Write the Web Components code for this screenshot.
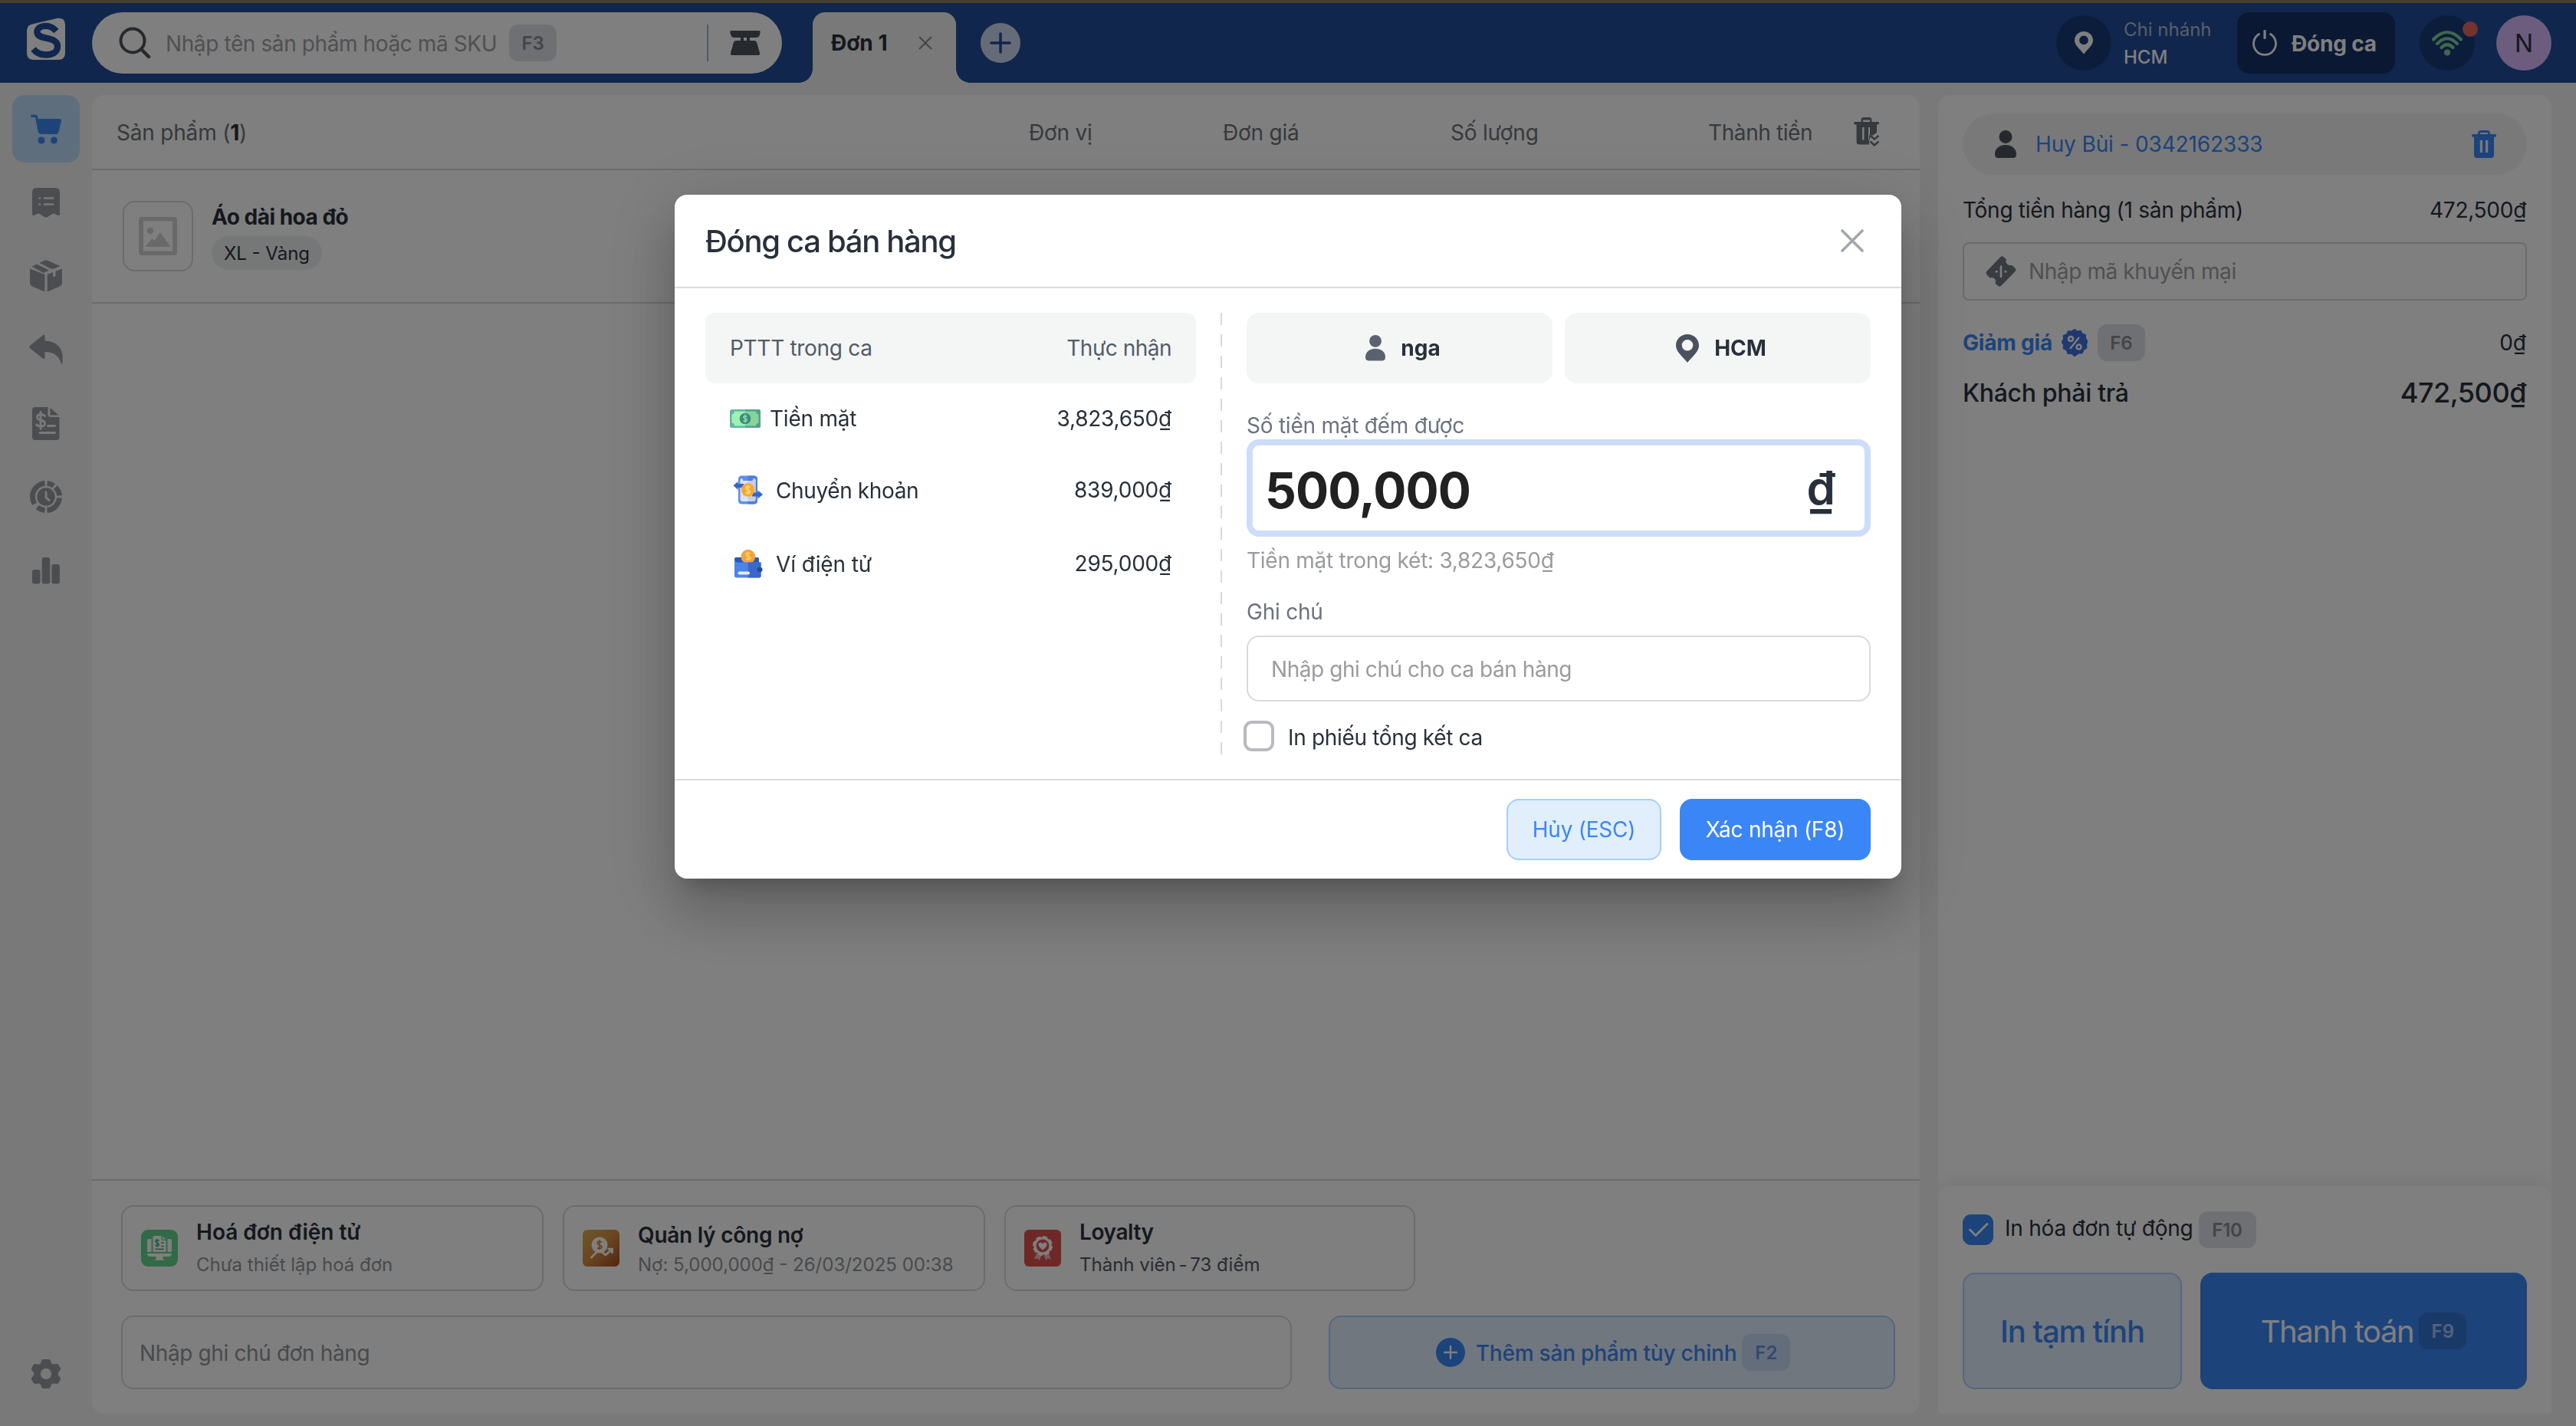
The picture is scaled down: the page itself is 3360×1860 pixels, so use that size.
<!DOCTYPE html>
<html lang="vi">
<head>
<meta charset="utf-8">
<title>Bán hàng</title>
<style>
html,body{margin:0;padding:0;height:100%}
body{font-family:Inter,"Noto Sans","Liberation Sans",sans-serif;font-size:28px;color:#28303b;background:#f3f3f3;overflow:hidden}
</style>
</head>
<body>
<pos-app></pos-app>
<script>
const BASE = `*{box-sizing:border-box}svg{display:block;flex:none}span{white-space:nowrap}`;
function define(name, css, html){
  const t = document.createElement('template');
  t.innerHTML = `<style>${BASE}${css}</style>${html}`;
  customElements.define(name, class extends HTMLElement{
    constructor(){ super(); this.attachShadow({mode:'open'}).appendChild(t.content.cloneNode(true)); }
  });
}

const ICONS = {
  logo:[50,56,`<path d="M9 8 L40 .8 Q50 0 50 9 V46 Q50 55 41 55 H9 Q0 55 0 46 V17 Q0 9 9 8Z" fill="#fff"/><path d="M38.500 17.500 C33 11.500 27 10.300 22 11 C15 12 13 16 13.500 19.500 C14.500 29.500 39.500 24 40 37 C40.500 46 32 48.500 25 48.500 C18 48.500 13 46.500 8.500 41" fill="none" stroke="#204c9a" stroke-width="8.300"/>`],
  search:[42,42,`<circle cx="18" cy="18" r="15.500" fill="none" stroke="currentColor" stroke-width="4"/><path d="M29.500 29.500 L39 39" stroke="currentColor" stroke-width="4.500" stroke-linecap="round"/>`],
  scale:[40,32,`<path d="M2 0 H38 Q40 0 39.700 2 L39 5 Q38.300 9 34 9 H6 Q1.700 9 1 5 L.3 2 Q0 0 2 0Z"/><path d="M14 8h4v6h-4zM22 8h4v6h-4z"/><path d="M8 13 H32 Q34.500 13 35.200 15.500 L39 29 Q39.700 32 37 32 H3 Q.3 32 1 29 L4.800 15.500 Q5.500 13 8 13Z"/>`],
  x18:[18,18,`<path d="M1 1 L17 17 M17 1 L1 17" stroke="currentColor" stroke-width="2.200"/>`],
  x28:[30,30,`<path d="M2 2 L28 28 M28 2 L2 28" stroke="currentColor" stroke-width="3.600" stroke-linecap="round"/>`],
  plus:[52,52,`<circle cx="26" cy="26" r="26" fill="#cdd9ee"/><path d="M26 14 V38 M14 26 H38" stroke="#204c9a" stroke-width="3.500" stroke-linecap="round"/>`],
  plusblue:[38,38,`<circle cx="19" cy="19" r="19" fill="#3b86f7"/><path d="M19 10 V28 M10 19 H28" stroke="#fff" stroke-width="2.400"/>`],
  pin:[30,37,`<path fill-rule="evenodd" d="M15 0 C6.500 0 0 6.500 0 14.500 C0 23 8 28 15 37 C22 28 30 23 30 14.500 C30 6.500 23.500 0 15 0Z M15 7 a7.300 7.300 0 1 1 0 14.600 a7.300 7.300 0 1 1 0-14.600Z"/>`],
  power:[34,34,`<path d="M9.500 5.500 A14.500 14.500 0 1 0 24.500 5.500" fill="none" stroke="currentColor" stroke-width="2.800" stroke-linecap="round"/><path d="M17 1.500 V10.500" stroke="currentColor" stroke-width="3.200" stroke-linecap="round"/>`],
  wifi:[42,34,`<g fill="none" stroke="#7fd19c" stroke-width="4.200" stroke-linecap="round"><path d="M3 12.500 Q21 -6.500 39 12.500"/><path d="M8 18 Q21 4.500 34 18"/><path d="M13.500 23 Q21 15.500 28.500 23"/></g><circle cx="21" cy="29.500" r="4" fill="#7fd19c"/>`],
  cart:[40,39,`<path d="M1.500 1.700 H7 Q8.500 1.700 9 3.500 L9.500 7 H38 Q40.300 7 39.900 9.500 L36.500 24 Q35.800 27 33 27 H14 Q10.500 27 9.500 23 L6 5 H1.500 Q0 5 0 3.300 Q0 1.700 1.500 1.700Z" transform="translate(0 -1)"/><circle cx="14" cy="34" r="4.500"/><circle cx="30.500" cy="34" r="4.500"/>`],
  receipt:[36,39,`<path fill-rule="evenodd" d="M6 0 H30 Q36 0 36 6 V34 Q36 37 33 35.800 L29.500 34 Q27.500 33 25.500 34.500 L20 38 Q18 39 16 38 L10.500 34.500 Q8.500 33 6.500 34 L3 35.800 Q0 37 0 34 V6 Q0 0 6 0Z"/><path d="M9.500 13.500 h.5 M16 13.500 H27 M9.500 21.500 h.5 M16 21.500 H27" stroke="#f3f3f3" stroke-width="2.700" stroke-linecap="round"/>`],
  box:[42,42,`<path d="M2.500 8.500 L9 5.500 L25 13.500 L18 17 Z M12.500 4 L19 .8 Q21 0 23 .8 L39.500 8 L34 10.500 L28.500 12 Z" /><path d="M0 11.500 L19.300 19 V41.500 L4 35 Q0 33 0 29.500Z M22.700 19 L30 16 V21 Q30 22.500 31.500 22 L33.500 21.200 V14.700 L42 11.500 V29.500 Q42 33 38 35 L22.700 41.500Z"/>`],
  reply:[44,40,`<path d="M17 2 Q20.500 -1 20.500 3 V8.500 C34 9 46 16 43.500 37 Q43 40 41.500 37 C38 27 31 23 20.500 23 V30 Q20.500 34 17 31 L1.500 18.500 Q-.8 16.500 1.500 14.500Z"/>`],
  bill:[36,43,`<path d="M4 0 H20.500 V9.500 Q20.500 13 24 13 H35.500 V39 Q35.500 43 31.500 43 H4 Q0 43 0 39 V4 Q0 0 4 0Z"/><path d="M23.500 1 L34.500 10.500 H23.500Z"/><path d="M16.500 11.500 Q14 9.500 11 9.500 Q6.500 9.800 6.500 13 Q6.500 16 11 17 Q16.500 18 16.500 21.500 Q16.500 25 11 25 Q8 25 5.500 23 M11 6.500 V28.500 M20.500 24.500 H29.500 M10 33.500 H29.500" fill="none" stroke="#f3f3f3" stroke-width="2.900" stroke-linecap="round"/>`],
  shift:[42,42,`<circle cx="21" cy="21" r="17.600" fill="none" stroke="currentColor" stroke-width="6.800" pathLength="360" stroke-dasharray="30 10 40 10 80 10 35 18 117 10" transform="rotate(-85 21 21)"/><circle cx="21" cy="21" r="11.700"/><path d="M21 15 V22 L25 25.500" fill="none" stroke="#f3f3f3" stroke-width="3" stroke-linecap="round" stroke-linejoin="round"/>`],
  bars:[36,36,`<rect x="0" y="17" width="10.500" height="18.500" rx="3"/><rect x="12.700" y="1" width="10.500" height="34.500" rx="3"/><rect x="25.400" y="10" width="10.500" height="25.500" rx="3"/>`],
  gear:[40,40,`<path fill-rule="evenodd" d="M14.500 2 Q15 1 16.500 1 H23.500 Q25 1 25.500 2 L27 6 Q28 8 30 7.500 L34 7 Q35.500 7 36.200 8 L38.800 12.500 Q39.500 13.700 38.500 15 L36 18.500 Q35.200 20 36 21.500 L38.500 25 Q39.500 26.300 38.800 27.500 L36.200 32 Q35.500 33 34 33 L30 32.500 Q28 32 27 34 L25.500 38 Q25 39 23.500 39 H16.500 Q15 39 14.500 38 L13 34 Q12 32 10 32.500 L6 33 Q4.500 33 3.800 32 L1.200 27.500 Q.5 26.300 1.500 25 L4 21.500 Q4.800 20 4 18.500 L1.500 15 Q.5 13.700 1.200 12.500 L3.800 8 Q4.500 7 6 7 L10 7.500 Q12 8 13 6Z M20 12.800 a7.200 7.200 0 1 0 0 14.400 a7.200 7.200 0 1 0 0-14.400Z"/>`],
  image:[50,50,`<path fill-rule="evenodd" d="M4 0 H46 Q50 0 50 4 V46 Q50 50 46 50 H4 Q0 50 0 46 V4 Q0 0 4 0Z M6 5.500 V44.500 H44 V5.500Z"/><circle cx="15" cy="18" r="4.300"/><path d="M8.500 39 L17 28 L20.500 31 L28 20 L41.500 39Z"/>`],
  trashall:[34,38,`<path fill-rule="evenodd" d="M9.500 3.500 Q9.500 0 13 0 H20 Q23.500 0 23.500 3.500 V6 H32 Q33 6 33 7.500 Q33 9.500 31.500 9.500 H30 V20 L24 24 L20 22.500 V35.500 H7 Q3.500 35.500 3.500 32 V9.500 H1.500 Q0 9.500 0 7.700 Q0 6 1.500 6 H9.500Z M12 6 H21 V3.500 H12Z M11 13 V29.500 H13.500 V13Z M19 13 V29.500 H21 V13Z"/><path d="M21.500 24 L26.800 28.500 L32.500 24 M21.500 31.500 L26.800 36.500 L32.500 31.500" fill="none" stroke="currentColor" stroke-width="2.500"/>`],
  trash:[32,36,`<path fill-rule="evenodd" d="M8 4 Q8 0 12 0 H20 Q24 0 24 4 V5 H31 Q32 5 32 6.800 Q32 8.700 30.500 8.700 H29 V32 Q29 36 25 36 H7 Q3 36 3 32 V8.700 H1.500 Q0 8.700 0 6.800 Q0 5 1.500 5 H8Z M11 5 H21 V3 H11Z M10.800 13 V29 H14 V13Z M18 13 V29 H21.200 V13Z"/>`],
  person:[28,36,`<circle cx="14" cy="8.500" r="8.500"/><path d="M14 19 C21 19 28 23 28 31 Q28 36 24 36 H4 Q0 36 0 31 C0 23 7 19 14 19Z"/>`],
  ticket:[40,40,`<path d="M19 1.500 Q21.500 -.8 24 1.500 L27 4.500 Q25.500 8 28 10.500 Q31 13 34.500 12 L38 15.500 Q40.500 18 38 20.500 L20.500 38.500 Q18 40.800 15.500 38.500 L12.500 35.500 Q14 32 11.500 29.500 Q9 27 5.500 28.500 L1.800 24.500 Q-.6 22 1.800 19.500Z"/><path d="M20 13.500 V27 M13.800 20.200 h.8 M25.500 20.200 h.8" stroke="#fff" stroke-width="2.600" stroke-linecap="round"/>`],
  percent:[34,36,`<path fill="#3f70e4" d="M17 0 L20.500 3 L25 2 L27 6 L31.500 7.500 L31.500 12 L34 16 L32.500 20 L33 25 L29 27.500 L27 32 L22.500 32 L17 36 L13 32.500 L8 32.500 L6.500 28 L2 25.500 L2.500 21 L0 17 L2.500 13 L2 8.500 L6.500 7 L8.500 2.500 L13 3Z" stroke="#3f70e4" stroke-width="1" stroke-linejoin="round"/><circle cx="12" cy="13" r="3" fill="none" stroke="#fff" stroke-width="2.500"/><circle cx="22.500" cy="23.500" r="3" fill="none" stroke="#fff" stroke-width="2.500"/><path d="M23 11 L11 26" stroke="#fff" stroke-width="2.200"/>`],
  check:[40,40,`<rect width="40" height="40" rx="11" fill="#3b86f7"/><path d="M9.500 20 L17 27.500 L32 12.500" fill="none" stroke="#fff" stroke-width="2.800" stroke-linecap="round" stroke-linejoin="round"/>`],
  einv:[48,48,`<rect width="48" height="48" rx="9" fill="#62d58c"/><g fill="#fff"><path d="M8 29 V14 Q8 12 10 12 H13.500 V29Z M40 29 V14 Q40 12 38 12 H34.500 V29Z"/><path d="M15.500 29 V10 Q15.500 8 17.500 8 H26.500 V12 Q26.500 14 28.500 14 H32.500 V29Z M28 8.500 L32.500 12.500 H28Z"/><path d="M8 31 H40 Q40 35 36.500 35 H28.500 V38 L31 39.800 H17 L19.500 38 V35 H11.500 Q8 35 8 31Z"/></g><path d="M23.500 14.500 Q21 12.500 19.300 14 Q18.300 16.200 21 17 Q24 18.200 23 20.300 Q21 22 18.500 20 M21 12 V22.500 M26 17 H30 M26 21.500 H30 M18.500 25.300 H29.500" fill="none" stroke="#4cb877" stroke-width="1.700"/>`],
  debt:[48,48,`<defs><linearGradient id="g" x1="0" y1="0" x2="1" y2="1"><stop offset="0" stop-color="#d9b555"/><stop offset=".5" stop-color="#d58a40"/><stop offset="1" stop-color="#a8481f"/></linearGradient></defs><rect width="48" height="48" rx="6" fill="url(#g)"/><circle cx="22" cy="20" r="10.500" fill="#fff"/><path d="M10.500 37 L21.500 26 L30 33 L38 25.500 M32.500 25 H38.500 V31" stroke="#fff" stroke-width="2.600" fill="none"/><path d="M25 16.500 Q22 14 19.500 16 Q18.500 19 22 20 Q26 21 24.500 23.500 Q22 25.500 19 23.500 M22 13.500 V26" fill="none" stroke="#d58a36" stroke-width="1.800"/>`],
  loyal:[48,48,`<rect width="48" height="48" rx="6" fill="#dc524d"/><path d="M16 31 L13 38.500 L17.500 37.500 L20 40 L22.500 33Z M32 31 L35 38.500 L30.500 37.500 L28 40 L25.500 33Z" fill="#fff" opacity=".6"/><circle cx="24" cy="21" r="11.500" fill="none" stroke="#fff" stroke-width="3" stroke-dasharray="6 3"/><circle cx="24" cy="21" r="10" fill="none" stroke="#fff" stroke-width="3.200"/><path d="M24 26.500 C20 23.500 18 21 18.500 18.500 C19.500 16 22.500 16 24 18.500 C25.500 16 28.500 16 29.500 18.500 C30 21 28 23.500 24 26.500Z" fill="#fff"/>`],
  cash:[40,24,`<rect width="40" height="24" rx="2.500" fill="#62b5a3"/><path d="M20 0 H37.500 Q40 0 40 2.500 V21.500 Q40 24 37.500 24 H20Z" fill="#54a08d"/><path d="M6 2.500 H20 V21.500 H6 Q6 18 2.500 17.500 V6.500 Q6 6 6 2.500Z" fill="#9df2b2"/><path d="M34 2.500 H20 V21.500 H34 Q34 18 37.500 17.500 V6.500 Q34 6 34 2.500Z" fill="#87d49b"/><circle cx="20" cy="12" r="7.300" fill="#3e8a82"/><path d="M22.500 9.500 Q20 7.500 18 9 Q17 11.200 20 12 Q23.500 13 22 15 Q20 16.500 17.500 14.600 M20 6.500 V17.500" fill="none" stroke="#8fe0a8" stroke-width="1.400"/>`],
  transfer:[40,38,`<path d="M12 .5 H27 Q32 .5 32 5 V33 Q32 37.500 27 37.500 H12 Q7 37.500 7 33 V5 Q7 .5 12 .5Z" fill="#5b8ef0"/><path d="M19.500 .5 H27 Q32 .5 32 5 V33 Q32 37.500 27 37.500 H19.500Z" fill="#4d7fdd"/><path d="M9.500 6 Q10 4 12 4 L13.500 7 H25.500 L27 4 Q29 4 29.500 6 V31 Q29.500 34 26.500 34 H12.500 Q9.500 34 9.500 31Z" fill="#dce3f2"/><path d="M19.500 7 H25.500 L27 4 Q29 4 29.500 6 V31 Q29.500 34 26.500 34 H19.500Z" fill="#c6cfe2"/><path d="M.5 13.300 L6.500 8 V11 H14 V16 H6.500 V19Z M39 25 L32.500 19.500 V22.500 H25 V27.500 H32.500 V30.500Z" fill="#3565c9"/><circle cx="19.500" cy="19" r="8.700" fill="#f5a934"/><path d="M22.500 16 Q19.500 13.500 17 15.500 Q16 18 19.500 19 Q23.500 20 22 22.500 Q19.500 24.500 16.500 22.300 M19.500 13 V25" fill="none" stroke="#fbdc6a" stroke-width="1.700"/>`],
  wallet:[38,38,`<path d="M2 11 H30 Q32 11 32 13 V20 H0 V13 Q0 11 2 11Z" fill="#2c57b5"/><circle cx="17.800" cy="10" r="9.300" fill="#f2a13f"/><path d="M20.800 6.500 Q17.800 4 15.300 6 Q14.300 8.500 17.800 9.500 Q21.800 10.500 20.300 13 Q17.800 15 14.800 12.800 M17.800 3.500 V15.500" fill="none" stroke="#fad05e" stroke-width="1.700"/><path d="M0 13 Q1 17.500 4 17.500 H34.500 V35 Q34.500 37.500 32 37.500 H2.500 Q0 37.500 0 35Z" fill="#4d82ea"/><path d="M17.800 17.500 H34.500 V35 Q34.500 37.500 32 37.500 H17.800Z" fill="#3868c8"/><rect x="29.500" y="24" width="7" height="6" rx="3" fill="#24489a"/><rect x="4.500" y="29.500" width="15.500" height="4" rx="2" fill="#e6eaf6"/>`]
};
customElements.define('ui-icon', class extends HTMLElement{
  constructor(){
    super(); this.attachShadow({mode:'open'});
    const [w,h,body] = ICONS[this.getAttribute('name')];
    const W = this.getAttribute('width') || w;
    this.shadowRoot.innerHTML = `<style>:host{display:block;flex:none}svg{display:block}</style><svg width="${W}" height="${W*h/w}" viewBox="0 0 ${w} ${h}" fill="currentColor">${body}</svg>`;
  }
});

define('ui-kbd', `:host{display:flex;align-items:center;justify-content:center;flex:none;height:48px;border-radius:12px;background:#dfe1e6;color:#868b94;font-size:24px;font-weight:600;letter-spacing:0}`, `<slot></slot>`);

define('pos-header', `
:host{display:flex;align-items:center;height:108px;border-top:4px solid #8b8052;background:#204c9a;padding:0 32px 0 35px}
.logo{margin-top:-10px}
.search{display:flex;align-items:center;width:900px;height:80px;border-radius:40px;background:#fff;margin-left:35px;padding:0 28px 0 35px;color:#56606a}
.search ui-icon{color:#4d555e}
.ph{color:#a1a1a3;margin-left:19px;letter-spacing:-.4px;padding-top:1px}
ui-kbd{width:62px;margin-left:16px}
.sep{width:2px;height:48px;background:#9fb5dd;margin:0 28px 0 auto}
.tab{position:relative;align-self:flex-end;height:92px;width:187px;margin-left:40px;background:#f3f3f3;border-radius:16px 16px 0 0;display:flex;align-items:center;padding:0 31px 12px 24px;justify-content:space-between;color:#28303b;font-weight:700}
.tab:before,.tab:after{content:"";position:absolute;bottom:0;width:18px;height:18px}
.tab:before{left:-18px;background:radial-gradient(circle at 0 0,#204c9a 17.500px,#f3f3f3 18px)}
.tab:after{right:-18px;background:radial-gradient(circle at 100% 0,#204c9a 17.500px,#f3f3f3 18px)}
.tab ui-icon{color:#8b8d91}
.add{margin-left:32px}
.dot{position:relative;width:72px;height:72px;border-radius:50%;background:#193b77;display:flex;align-items:center;justify-content:center;color:#fff;flex:none}
.pin{margin-left:auto}
.br{display:flex;flex-direction:column;margin-left:16px;font-size:24px;width:148px;padding-top:1px}
.br span{line-height:36px}
.br .a{color:#b4bccb}.br .b{color:#fff;font-weight:500}
.close{width:206px;height:80px;border-radius:16px;background:#143067;display:flex;align-items:center;padding-left:19px;gap:18px;color:#fff;font-weight:700;margin-right:32px}
.close span{padding-top:2px;letter-spacing:-.2px}
.badge{position:absolute;right:-4px;top:8px;width:20px;height:20px;border-radius:50%;background:#e8675f}
.av{width:72px;height:72px;border-radius:50%;background:#d9bafc;margin-left:28px;display:flex;align-items:center;justify-content:center;color:#28303b;font-size:32px}
`, `
<ui-icon class="logo" name="logo"></ui-icon>
<div class="search"><ui-icon name="search"></ui-icon><span class="ph">Nhập tên sản phẩm hoặc mã SKU</span><ui-kbd><span>F3</span></ui-kbd><div class="sep"></div><ui-icon name="scale"></ui-icon></div>
<div class="tab"><span>Đơn 1</span><ui-icon name="x18"></ui-icon></div>
<ui-icon class="add" name="plus"></ui-icon>
<div class="dot pin"><ui-icon name="pin" width="24"></ui-icon></div>
<div class="br"><span class="a">Chi nhánh</span><span class="b">HCM</span></div>
<div class="close"><ui-icon name="power"></ui-icon><span>Đóng ca</span></div>
<div class="dot"><ui-icon name="wifi"></ui-icon><div class="badge"></div></div>
<div class="av"><span>N</span></div>`);

define('pos-sidebar', `
:host{display:flex;flex-direction:column;align-items:center;width:120px;padding:16px 0 24px;gap:8px;color:#989aa0}
div{width:88px;height:88px;border-radius:16px;display:flex;align-items:center;justify-content:center}
.on{background:#bedcf8;color:#3b86f7}
.end{margin-top:auto}
`, `<div class="on"><ui-icon name="cart"></ui-icon></div><div><ui-icon name="receipt"></ui-icon></div><div><ui-icon name="box"></ui-icon></div><div><ui-icon name="reply"></ui-icon></div><div><ui-icon name="bill"></ui-icon></div><div><ui-icon name="shift"></ui-icon></div><div><ui-icon name="bars"></ui-icon></div><div class="end"><ui-icon name="gear"></ui-icon></div>`);

define('info-card', `
:host{display:flex;align-items:center;height:112px;border:2px solid #d9d9d9;border-radius:16px;padding-left:24px;gap:24px}
div{display:flex;flex-direction:column}
.t{display:block;font-weight:600;line-height:44px}
.s{display:block;font-size:24px;line-height:var(--sub,42px);color:var(--subc,#919499)}
`, `<slot name="icon"></slot><div><slot class="t" name="title"></slot><slot class="s" name="sub"></slot></div>`);

define('pos-cart', `
:host{display:flex;flex-direction:column;width:2384px;margin-top:16px;height:1720px;background:#fff;border-radius:16px;overflow:hidden}
.head{display:grid;grid-template-columns:1222px 253px 297px 336px 190px auto;align-items:center;height:98px;border-bottom:2px solid #d9d9d9;color:#6c727b}
.head span{padding-top:2px;letter-spacing:-.2px}
.head span.last{letter-spacing:-.4px}
.head>:first-child{padding-left:32px}
b{color:#28303b}
.row{display:flex;height:174px;border-bottom:2px solid #d9d9d9;padding:40px 40px 0}
.thumb{width:92px;height:92px;border:2px solid #d9d9d9;border-radius:16px;display:flex;align-items:center;justify-content:center;color:#d2d3d5}
.info{margin-left:24px}
.info .n{display:block;font-weight:700;line-height:42px;height:46px;letter-spacing:-.5px}
.chip{display:inline-flex;align-items:center;justify-content:center;width:144px;height:44px;border-radius:22px;background:#edf1f0;font-size:24px}
.foot{margin-top:auto;border-top:2px solid #d9d9d9;padding:32px 32px 32px 38px;height:306px;display:flex;flex-direction:column;gap:32px}
.cards{display:flex;gap:25px}
.c1,.c2{width:551px}.c3{width:536px}
.c2{--sub:34px}.c3{--subc:#515861}
.dashmark{margin:0 -3px}
.bar{display:flex;gap:48px}
.note{width:1527px;height:96px;border:2px solid #d9d9d9;border-radius:16px;display:flex;align-items:center;padding:1px 0 0 22px;color:#919499;letter-spacing:-.37px}
.btn{flex:1;height:96px;border:2px solid #a8d0fc;border-radius:16px;background:#e1effd;display:flex;align-items:center;justify-content:center;color:#3b86f7;font-weight:500;padding-left:3px}
.btn>span{margin:0 7px 0 14px;letter-spacing:-.2px;padding-top:1px}
.btn ui-kbd{background:#c8daf8;color:#6a95d8;width:63px}
`, `
<div class="head"><span>Sản phẩm (<b>1</b>)</span><span>Đơn vị</span><span>Đơn giá</span><span>Số lượng</span><span class="last">Thành tiền</span><ui-icon name="trashall"></ui-icon></div>
<div class="row"><div class="thumb"><ui-icon name="image"></ui-icon></div><div class="info"><span class="n">Áo dài hoa đỏ</span><div class="chip"><span>XL - Vàng</span></div></div></div>
<div class="foot">
<div class="cards">
<info-card class="c1"><ui-icon slot="icon" name="einv"></ui-icon><span slot="title">Hoá đơn điện tử</span><span slot="sub">Chưa thiết lập hoá đơn</span></info-card>
<info-card class="c2"><ui-icon slot="icon" name="debt"></ui-icon><span slot="title" style="letter-spacing:-.25px">Quản lý công nợ</span><span slot="sub">Nợ: 5,000,000₫ - 26/03/2025 00:38</span></info-card>
<info-card class="c3"><ui-icon slot="icon" name="loyal"></ui-icon><span slot="title" style="letter-spacing:-.4px">Loyalty</span><span slot="sub">Thành viên <span class="dashmark">-</span> 73 điểm</span></info-card>
</div>
<div class="bar"><div class="note"><span>Nhập ghi chú đơn hàng</span></div><div class="btn"><ui-icon name="plusblue"></ui-icon><span>Thêm sản phẩm tùy chỉnh</span><ui-kbd><span>F2</span></ui-kbd></div></div>
</div>`);

define('pos-payment', `
:host{display:flex;flex-direction:column;width:800px;height:1720px;margin:16px 0 0 24px;background:#fff;border-radius:16px 16px 0 0}
.top{padding:24px 32px 0;display:flex;flex-direction:column}
.cust{height:80px;border-radius:40px;background:#f3f3f3;display:flex;align-items:center;padding:0 40px 0 42px;color:#4b535d}
.cust span{color:#3b86f7;margin:0 auto 0 25px;letter-spacing:-.13px}
.cust .del{color:#3b86f7}
.r{display:flex;align-items:center;justify-content:space-between}
.r>span:last-child{margin-right:1px}
.sum{height:88px;padding-top:4px;letter-spacing:-.28px}
.promo{height:76px;border:2px solid #d9d9d9;border-radius:8px;display:flex;align-items:center;padding-left:28px;gap:16px;color:#717982}
.promo span{color:#a1a1a3;letter-spacing:-.4px}
.disc{margin-top:16px;height:78px}
.disc div{display:flex;align-items:center;color:#3b86f7;font-weight:700;letter-spacing:-.2px}
.disc ui-icon{margin:0 13px 0 12px}
ui-kbd{width:62px}
.pay{height:52px;font-size:32px;font-weight:500;letter-spacing:-.3px}
.pay .v{font-size:36px;letter-spacing:-.45px}
.bot{margin-top:auto;height:297px;border-radius:16px 16px 0 0;box-shadow:0 -4px 24px rgba(0,0,0,.09);clip-path:inset(-40px 0 0 0);padding:33px 32px 32px;display:flex;flex-direction:column;gap:32px}
.auto{display:flex;align-items:center;height:48px}
.auto span{margin:-4px 7px 0 15px;letter-spacing:-.22px}
.auto ui-kbd{width:75px}
.auto ui-kbd span{margin:0}
.btns{display:flex;gap:24px;height:152px;font-size:40px}
.btns div{display:flex;align-items:center;justify-content:center;border-radius:16px}
.a{width:286px;background:#e1effd;border:2px solid #a8d0fc;color:#3b86f7;font-weight:500;letter-spacing:-1.1px}
.b{flex:1;background:#3b86f7;color:#fff}
.b>span{letter-spacing:-1.400px}
.b ui-kbd{background:#3372d2;color:#a9c6f3;margin-left:7px}
`, `
<div class="top">
<div class="cust"><ui-icon name="person"></ui-icon><span>Huy Bùi - 0342162333</span><ui-icon class="del" name="trash"></ui-icon></div>
<div class="r sum"><span>Tổng tiền hàng (1 sản phẩm)</span><span>472,500₫</span></div>
<div class="promo"><ui-icon name="ticket"></ui-icon><span>Nhập mã khuyến mại</span></div>
<div class="r disc"><div><span>Giảm giá</span><ui-icon name="percent"></ui-icon><ui-kbd><span>F6</span></ui-kbd></div><span>0₫</span></div>
<div class="r pay"><span>Khách phải trả</span><span class="v">472,500₫</span></div>
</div>
<div class="bot"><div class="auto"><ui-icon name="check"></ui-icon><span>In hóa đơn tự động</span><ui-kbd><span>F10</span></ui-kbd></div>
<div class="btns"><div class="a"><span>In tạm tính</span></div><div class="b"><span>Thanh toán</span><ui-kbd><span>F9</span></ui-kbd></div></div></div>`);

define('pay-row', `:host{display:flex;align-items:center;justify-content:space-between;padding:0 32px}div{display:flex;align-items:center}`, `<div><slot name="label"></slot></div><slot></slot>`);

define('shift-modal', `
:host{display:block;width:1600px;height:892px;background:#fff;border-radius:16px;box-shadow:0 22px 30px -14px rgba(0,0,0,.2),0 48px 76px 6px rgba(0,0,0,.14),0 18px 92px 16px rgba(0,0,0,.12)}
.h{height:122px;border-bottom:2px solid #dcdcde;display:flex;align-items:center;justify-content:space-between;padding:0 49px 0 40px;font-size:40px;font-weight:550;letter-spacing:-1.300px}
.h ui-icon{color:#a5a7ae}
.body{display:flex;height:640px;padding:32px 40px 0}
.l{width:640px}
.l span{letter-spacing:-.22px}
.th{height:92px;background:#f4f6f5;border-radius:12px;color:#535b69}
.l .th span{letter-spacing:-.3px}
.l .th span:last-child{letter-spacing:-.5px}
.l .tight{letter-spacing:-.38px;padding-top:2px}
.l .wal{letter-spacing:-.1px;padding-top:2px}
.dash{width:2px;height:576px;margin:0 32px;background:repeating-linear-gradient(#d9d9d9 0 16px,transparent 16px 28px)}
.r{width:814px}
.who{display:flex;gap:16px}
.who div{flex:1;height:92px;background:#f4f6f5;border-radius:16px;display:flex;align-items:center;justify-content:center;gap:20px;padding-left:9px;font-weight:700}
.who ui-icon{color:#4a5260}
.who .u{color:#5a6270}
label{display:flex;align-items:center;color:#6c727f;letter-spacing:-.23px}
.amt{height:127px;border:8px solid #cdddf9;border-radius:16px;display:flex;align-items:center;justify-content:space-between;padding:5px 38px 0 16px;font-size:64px;font-weight:700;color:#212121;letter-spacing:-.9px}
.amt .d{font-size:60px;color:#28303b;font-weight:600;letter-spacing:0;margin-top:-6px}
.hint{display:flex;align-items:center;height:62px;color:#9a9ba0;letter-spacing:-.26px}
.note{height:86px;border:2px solid #dadadc;border-radius:16px;display:flex;align-items:center;color:#9a9ba0;padding:1px 0 0 30px;letter-spacing:-.44px}
.ck{display:flex;align-items:center;margin:25px 0 0 -4px;height:40px}
.ck i{width:40px;height:40px;border:4px solid #b9bac0;border-radius:11px;margin-right:18px}
.ck span{padding-top:4px;letter-spacing:-.33px}
.f{height:130px;border-top:2px solid #dcdcde;padding:24px 40px;display:flex;justify-content:flex-end;gap:24px}
.f div{height:80px;border-radius:16px;display:flex;align-items:center;justify-content:center;letter-spacing:-.25px}
.no{width:202px;background:#e1effd;border:2px solid #a6cffc;color:#3b86f7}
.ok{width:249px;background:#3b86f7;color:#fff}
`, `
<div class="h"><span>Đóng ca bán hàng</span><ui-icon name="x28"></ui-icon></div>
<div class="body">
<div class="l">
<pay-row class="th"><span slot="label">PTTT trong ca</span><span>Thực nhận</span></pay-row>
<pay-row style="height:92px"><ui-icon slot="label" name="cash" style="margin-right:12px"></ui-icon><span slot="label">Tiền mặt</span><span>3,823,650₫</span></pay-row>
<pay-row style="height:94px"><ui-icon slot="label" name="transfer" style="margin:0 16px 0 4px"></ui-icon><span slot="label" class="tight">Chuyển khoản</span><span>839,000₫</span></pay-row>
<pay-row style="height:98px"><ui-icon slot="label" name="wallet" style="margin:0 16px 0 6px"></ui-icon><span slot="label" class="wal">Ví điện tử</span><span>295,000₫</span></pay-row>
</div>
<div class="dash"></div>
<div class="r">
<div class="who"><div><ui-icon class="u" name="person" width="26"></ui-icon><span>nga</span></div><div><ui-icon name="pin"></ui-icon><span>HCM</span></div></div>
<label style="height:36px;margin-top:37px"><span>Số tiền mặt đếm được</span></label>
<div class="amt"><span>500,000</span><span class="d">₫</span></div>
<div class="hint"><span>Tiền mặt trong két: 3,823,650₫</span></div>
<label style="height:67px;padding-top:5px"><span>Ghi chú</span></label>
<div class="note"><span>Nhập ghi chú cho ca bán hàng</span></div>
<div class="ck"><i></i><span>In phiếu tổng kết ca</span></div>
</div>
</div>
<div class="f"><div class="no"><span>Hủy (ESC)</span></div><div class="ok"><span>Xác nhận (F8)</span></div></div>`);

define('pos-app', `
:host{display:block;width:3360px;height:1860px}
.main{display:flex;height:1752px}
.scrim{position:fixed;inset:0;background:rgba(0,0,0,.5);display:flex;justify-content:center;align-items:flex-start;padding-top:254px}
`, `<pos-header></pos-header><div class="main"><pos-sidebar></pos-sidebar><pos-cart></pos-cart><pos-payment></pos-payment></div><div class="scrim"><shift-modal></shift-modal></div>`);
</script>
</body>
</html>
